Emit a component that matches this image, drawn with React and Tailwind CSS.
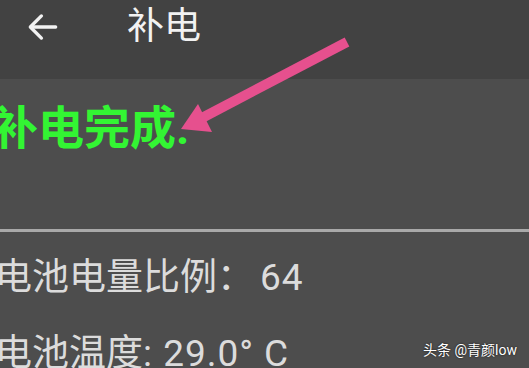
import React from 'react';

const cjk = { fontFamily: 'Roboto, "Noto Sans CJK SC", sans-serif' };

const App = () => {
  return (
    <div className="relative w-[529px] h-[368px] overflow-hidden bg-[#4d4d4d]" style={cjk}>
      {/* Top bar */}
      <div className="h-[79px] bg-[#424242] flex items-center">
        <svg className="ml-[24px] w-[38px] h-[38px] -mt-[26px]" viewBox="0 0 24 24" fill="none" stroke="#f2f2f2" strokeWidth="2.1" strokeLinecap="round" strokeLinejoin="round">
          <path d="M20 12H4.5" />
          <path d="M11 5l-7 7 7 7" />
        </svg>
        <h1 className="ml-[65px] -mt-[26px] text-[37px] leading-none text-[#f2f2f2] font-normal">补电</h1>
      </div>

      {/* Status */}
      <div className="h-[150px] pt-[26px]">
        <p className="-ml-[8px] text-[46px] leading-none font-bold text-[#33f533]">补电完成.</p>
      </div>

      <div className="h-[3px] bg-[#a9a9a9]" />

      {/* Info rows */}
      <div className="-ml-[5px] pt-[27px] text-[37px] leading-none text-[#dcdcdc] flex flex-col gap-[39px]">
        <p>电池电量比例：<span className="ml-[6px] tracking-[1px]">64</span></p>
        <p>电池温度: <span className="ml-[2px] tracking-[1px]">29.0°</span><span className="ml-[10px]">C</span></p>
      </div>

      {/* Annotation arrow */}
      <svg className="absolute left-0 top-0 pointer-events-none" width="529" height="368" viewBox="0 0 529 368">
        <line x1="347" y1="42" x2="200" y2="119" stroke="#e6508e" strokeWidth="10" strokeLinecap="butt" />
        <polygon points="181,129 198,104 212,132" fill="#e6508e" />
      </svg>

      {/* Watermark */}
      <div className="absolute right-[12px] bottom-[7px] text-[14px] text-white [text-shadow:0_0_2px_rgba(0,0,0,0.8)]">
        头条 @青颜low
      </div>
    </div>
  );
};

export default App;
